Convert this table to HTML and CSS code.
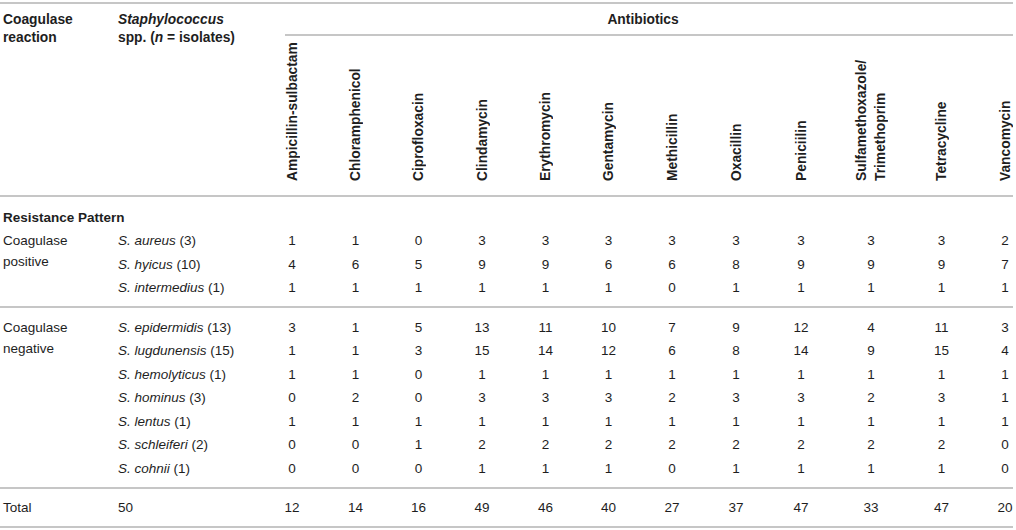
FILE: index.html
```html
<!DOCTYPE html>
<html lang="en">
<head>
    <meta charset="UTF-8">
    <title>Resistance pattern of Staphylococcus spp.</title>
    <link rel="stylesheet" href="styles.css">
</head>
<body>
    <table class="res-table">
        <colgroup>
            <col class="c-group">
            <col class="c-species">
            <col style="width:64px"><col style="width:63px"><col style="width:63px"><col style="width:64px">
            <col style="width:63px"><col style="width:63px"><col style="width:64px"><col style="width:64px">
            <col style="width:66px"><col style="width:74px"><col style="width:67px"><col style="width:38px">
        </colgroup>
        <thead>
            <tr class="head-top">
                <th rowspan="2" class="label">Coagulase<br>reaction</th>
                <th rowspan="2" class="label"><em>Staphylococcus</em><br>spp. (<em>n</em> = isolates)</th>
                <th colspan="12" class="abx-group"><div class="abx-title">Antibiotics</div></th>
            </tr>
            <tr class="head-names">
                <th><div class="rot-wrap"><div class="rot">Ampicillin-sulbactam</div></div></th>
                <th><div class="rot-wrap"><div class="rot">Chloramphenicol</div></div></th>
                <th><div class="rot-wrap"><div class="rot">Ciprofloxacin</div></div></th>
                <th><div class="rot-wrap"><div class="rot">Clindamycin</div></div></th>
                <th><div class="rot-wrap"><div class="rot">Erythromycin</div></div></th>
                <th><div class="rot-wrap"><div class="rot">Gentamycin</div></div></th>
                <th><div class="rot-wrap"><div class="rot">Methicillin</div></div></th>
                <th><div class="rot-wrap"><div class="rot">Oxacillin</div></div></th>
                <th><div class="rot-wrap"><div class="rot">Peniciilin</div></div></th>
                <th><div class="rot-wrap"><div class="rot">Sulfamethoxazole/<br>Trimethoprim</div></div></th>
                <th><div class="rot-wrap"><div class="rot">Tetracycline</div></div></th>
                <th class="last"><div class="rot-wrap"><div class="rot">Vancomycin</div></div></th>
            </tr>
        </thead>
        <tbody>
            <tr class="section">
                <td colspan="14">Resistance Pattern</td>
            </tr>
            <tr>
                <td rowspan="3" class="grp grp-pos">Coagulase<br>positive</td>
                <td class="sp"><em>S. aureus</em> (3)</td>
                <td>1</td><td>1</td><td>0</td><td>3</td><td>3</td><td>3</td><td>3</td><td>3</td><td>3</td><td>3</td><td>3</td><td class="last">2</td>
            </tr>
            <tr>
                <td class="sp"><em>S. hyicus</em> (10)</td>
                <td>4</td><td>6</td><td>5</td><td>9</td><td>9</td><td>6</td><td>6</td><td>8</td><td>9</td><td>9</td><td>9</td><td class="last">7</td>
            </tr>
            <tr class="grp-end">
                <td class="sp"><em>S. intermedius</em> (1)</td>
                <td>1</td><td>1</td><td>1</td><td>1</td><td>1</td><td>1</td><td>0</td><td>1</td><td>1</td><td>1</td><td>1</td><td class="last">1</td>
            </tr>
            <tr class="grp-start">
                <td rowspan="7" class="grp grp-neg">Coagulase<br>negative</td>
                <td class="sp"><em>S. epidermidis</em> (13)</td>
                <td>3</td><td>1</td><td>5</td><td>13</td><td>11</td><td>10</td><td>7</td><td>9</td><td>12</td><td>4</td><td>11</td><td class="last">3</td>
            </tr>
            <tr>
                <td class="sp"><em>S. lugdunensis</em> (15)</td>
                <td>1</td><td>1</td><td>3</td><td>15</td><td>14</td><td>12</td><td>6</td><td>8</td><td>14</td><td>9</td><td>15</td><td class="last">4</td>
            </tr>
            <tr>
                <td class="sp"><em>S. hemolyticus</em> (1)</td>
                <td>1</td><td>1</td><td>0</td><td>1</td><td>1</td><td>1</td><td>1</td><td>1</td><td>1</td><td>1</td><td>1</td><td class="last">1</td>
            </tr>
            <tr>
                <td class="sp"><em>S. hominus</em> (3)</td>
                <td>0</td><td>2</td><td>0</td><td>3</td><td>3</td><td>3</td><td>2</td><td>3</td><td>3</td><td>2</td><td>3</td><td class="last">1</td>
            </tr>
            <tr>
                <td class="sp"><em>S. lentus</em> (1)</td>
                <td>1</td><td>1</td><td>1</td><td>1</td><td>1</td><td>1</td><td>1</td><td>1</td><td>1</td><td>1</td><td>1</td><td class="last">1</td>
            </tr>
            <tr>
                <td class="sp"><em>S. schleiferi</em> (2)</td>
                <td>0</td><td>0</td><td>1</td><td>2</td><td>2</td><td>2</td><td>2</td><td>2</td><td>2</td><td>2</td><td>2</td><td class="last">0</td>
            </tr>
            <tr class="grp-end">
                <td class="sp"><em>S. cohnii</em> (1)</td>
                <td>0</td><td>0</td><td>0</td><td>1</td><td>1</td><td>1</td><td>0</td><td>1</td><td>1</td><td>1</td><td>1</td><td class="last">0</td>
            </tr>
            <tr class="total">
                <td class="grp">Total</td>
                <td class="sp">50</td>
                <td>12</td><td>14</td><td>16</td><td>49</td><td>46</td><td>40</td><td>27</td><td>37</td><td>47</td><td>33</td><td>47</td><td class="last">20</td>
            </tr>
        </tbody>
    </table>
</body>
</html>
```

FILE: styles.css
```css
body {
    margin: 2px 0 0 0;
    background-color: #fff;
    font-family: "Liberation Sans", Arial, sans-serif;
    color: #1e1e1e;
}
.res-table {
    width: 1013px;
    table-layout: fixed;
    border-collapse: separate;
    border-spacing: 0;
    font-size: 13.5px;
}
.c-group {
    width: 115px;
}
.c-species {
    width: 145px;
}

/* header */
.res-table th {
    font-weight: bold;
    font-size: 13.8px;
    padding: 0;
}
.head-top th {
    border-top: 2px solid #c6c6c6;
}
.res-table th.label {
    text-align: left;
    vertical-align: top;
    line-height: 18px;
    padding: 7px 0 0 3px;
    border-bottom: 2px solid #c6c6c6;
}
.abx-title {
    margin-left: 25px;
    padding: 7px 12px 5px 0;
    line-height: 18px;
    text-align: center;
    border-bottom: 2px solid #c6c6c6;
}
.head-names th {
    vertical-align: bottom;
    padding: 5px 0 14px 0;
    border-bottom: 2px solid #c6c6c6;
}
.rot-wrap {
    display: flex;
    justify-content: center;
}
.rot {
    writing-mode: vertical-rl;
    transform: rotate(180deg);
    height: 140px;
    line-height: 19px;
    text-align: start;
    white-space: nowrap;
}

/* body */
.res-table td {
    padding: 4px 0;
    line-height: 15.5px;
    text-align: center;
    white-space: nowrap;
}
.res-table td.sp,
.res-table td.grp {
    text-align: left;
    padding-left: 3px;
}
.res-table .last {
    padding-left: 22px;
}
.section td {
    font-weight: bold;
    text-align: left;
    padding: 12.5px 0 4px 3px;
}
.res-table td.grp-pos,
.res-table td.grp-neg {
    vertical-align: top;
    line-height: 21px;
    padding-top: 1px;
}
.res-table td.grp-neg {
    padding-top: 8.5px;
}
.grp-end td {
    padding-bottom: 10.5px;
}
.grp-start td {
    padding-top: 11.5px;
    border-top: 2px solid #c6c6c6;
}
.total td {
    padding-top: 11px;
    padding-bottom: 10.5px;
    border-top: 2px solid #c6c6c6;
    border-bottom: 2px solid #c6c6c6;
}
```
